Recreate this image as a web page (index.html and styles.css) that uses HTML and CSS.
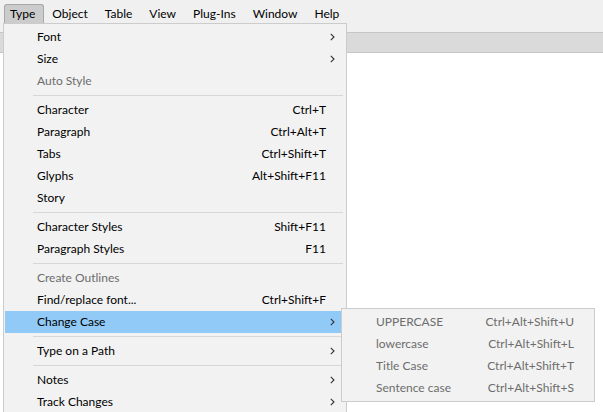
FILE: index.html
```html
<!DOCTYPE html>
<html>
<head>
<meta charset="utf-8">
<link rel="stylesheet" href="styles.css">
</head>
<body>
<div class="app">
  <nav class="menubar">
    <span class="mb-item active">Type</span>
    <span class="mb-item">Object</span>
    <span class="mb-item">Table</span>
    <span class="mb-item">View</span>
    <span class="mb-item">Plug-Ins</span>
    <span class="mb-item">Window</span>
    <span class="mb-item">Help</span>
  </nav>
  <div class="gap"></div>
  <div class="strip"></div>
  <div class="canvas"></div>

  <div class="dropdown">
    <div class="item"><span class="label">Font</span><span class="key"></span><span class="arrow"><svg width="5" height="8" viewBox="0 0 5 8"><path d="M0.8 0.8 L4 4 L0.8 7.2" fill="none" stroke="#333" stroke-width="1.1"/></svg></span></div>
    <div class="item"><span class="label">Size</span><span class="key"></span><span class="arrow"><svg width="5" height="8" viewBox="0 0 5 8"><path d="M0.8 0.8 L4 4 L0.8 7.2" fill="none" stroke="#333" stroke-width="1.1"/></svg></span></div>
    <div class="item disabled"><span class="label">Auto Style</span><span class="key"></span><span class="arrow"></span></div>
    <div class="sep"></div>
    <div class="item"><span class="label">Character</span><span class="key">Ctrl+T</span><span class="arrow"></span></div>
    <div class="item"><span class="label">Paragraph</span><span class="key">Ctrl+Alt+T</span><span class="arrow"></span></div>
    <div class="item"><span class="label">Tabs</span><span class="key">Ctrl+Shift+T</span><span class="arrow"></span></div>
    <div class="item"><span class="label">Glyphs</span><span class="key">Alt+Shift+F11</span><span class="arrow"></span></div>
    <div class="item"><span class="label">Story</span><span class="key"></span><span class="arrow"></span></div>
    <div class="sep"></div>
    <div class="item"><span class="label">Character Styles</span><span class="key">Shift+F11</span><span class="arrow"></span></div>
    <div class="item"><span class="label">Paragraph Styles</span><span class="key">F11</span><span class="arrow"></span></div>
    <div class="sep"></div>
    <div class="item disabled"><span class="label">Create Outlines</span><span class="key"></span><span class="arrow"></span></div>
    <div class="item"><span class="label">Find/replace font...</span><span class="key">Ctrl+Shift+F</span><span class="arrow"></span></div>
    <div class="item hover"><span class="label">Change Case</span><span class="key"></span><span class="arrow"><svg width="5" height="8" viewBox="0 0 5 8"><path d="M0.8 0.8 L4 4 L0.8 7.2" fill="none" stroke="#333" stroke-width="1.1"/></svg></span></div>
    <div class="sep"></div>
    <div class="item"><span class="label">Type on a Path</span><span class="key"></span><span class="arrow"><svg width="5" height="8" viewBox="0 0 5 8"><path d="M0.8 0.8 L4 4 L0.8 7.2" fill="none" stroke="#333" stroke-width="1.1"/></svg></span></div>
    <div class="sep"></div>
    <div class="item"><span class="label">Notes</span><span class="key"></span><span class="arrow"><svg width="5" height="8" viewBox="0 0 5 8"><path d="M0.8 0.8 L4 4 L0.8 7.2" fill="none" stroke="#333" stroke-width="1.1"/></svg></span></div>
    <div class="item"><span class="label">Track Changes</span><span class="key"></span><span class="arrow"><svg width="5" height="8" viewBox="0 0 5 8"><path d="M0.8 0.8 L4 4 L0.8 7.2" fill="none" stroke="#333" stroke-width="1.1"/></svg></span></div>
  </div>

  <div class="submenu">
    <div class="item disabled"><span class="label">UPPERCASE</span><span class="key">Ctrl+Alt+Shift+U</span><span class="arrow"></span></div>
    <div class="item disabled"><span class="label">lowercase</span><span class="key">Ctrl+Alt+Shift+L</span><span class="arrow"></span></div>
    <div class="item disabled"><span class="label">Title Case</span><span class="key">Ctrl+Alt+Shift+T</span><span class="arrow"></span></div>
    <div class="item disabled"><span class="label">Sentence case</span><span class="key">Ctrl+Alt+Shift+S</span><span class="arrow"></span></div>
  </div>
</div>
</body>
</html>
```

FILE: styles.css
```css
* { box-sizing: border-box; }
html, body { margin: 0; padding: 0; }
body {
  font-family: "Lato", "Liberation Sans", sans-serif;
  font-size: 12px;
  color: #000;
}
.app {
  position: relative;
  width: 603px;
  height: 412px;
  overflow: hidden;
  background: #f0f0f0;
  display: flex;
  flex-direction: column;
}
.menubar {
  height: 23px;
  display: flex;
  align-items: flex-end;
  padding-left: 4px;
}
.mb-item {
  height: 19px;
  line-height: 18px;
  padding: 0 8px 0 5px;
  margin-right: 2px;
  border: 1px solid transparent;
  border-bottom: 0;
  border-radius: 3px 3px 0 0;
  white-space: nowrap;
}
.mb-item.active {
  background: #cccccc;
  border-color: #a8a8a8;
}
.gap { height: 9px; }
.strip {
  height: 21px;
  background: #dadada;
  border-top: 1px solid #c6c6c6;
  border-bottom: 1px solid #c6c6c6;
}
.canvas {
  flex: 1;
  background: #fff;
}
.dropdown {
  position: absolute;
  left: 3px;
  top: 23px;
  width: 344px;
  height: 420px;
  background: #f2f2f2;
  border: 1px solid #cccccc;
  padding: 2px 0;
}
.submenu {
  position: absolute;
  left: 341px;
  top: 308px;
  width: 254px;
  height: 94px;
  background: #f2f2f2;
  border: 1px solid #cccccc;
  padding: 2px 0;
}
.item {
  height: 22px;
  margin: 0 1px;
  padding-left: 32px;
  padding-bottom: 1px;
  display: grid;
  grid-template-columns: 1fr auto 19px;
  align-items: center;
  white-space: nowrap;
}
.submenu .item { padding-left: 33px; }
.item.disabled { color: #6d6d6d; }
.item.hover { background: #91c9f7; }
.arrow {
  display: flex;
  align-items: center;
  padding-left: 4px;
  height: 21px;
}
.sep {
  height: 1px;
  background: #d7d7d7;
  margin: 3px 3px 3px 29px;
}
```
